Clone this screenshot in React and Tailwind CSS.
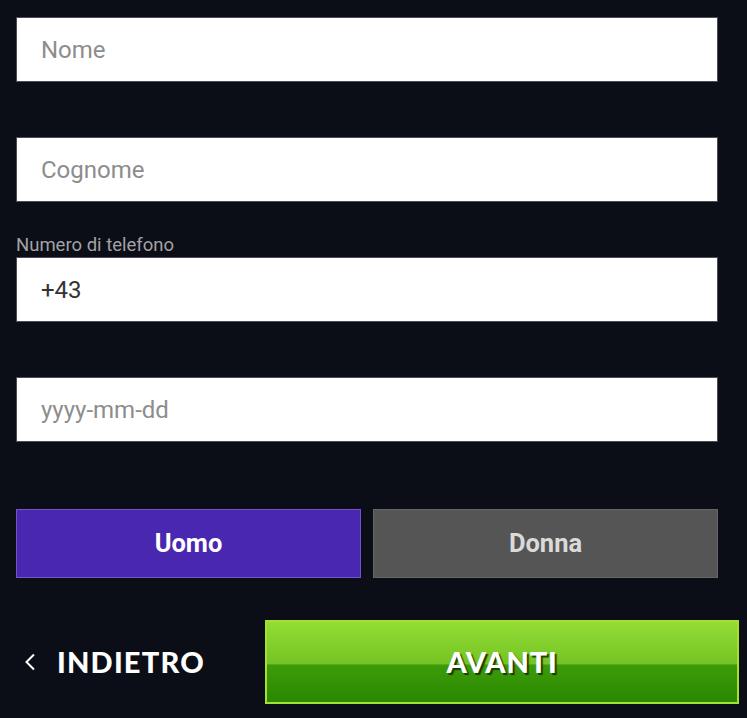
import React from "react";

function Field({ placeholder, value }) {
  return (
    <div className="h-[65px] w-[702px] bg-white border border-[#4b4e56] flex items-center pl-6">
      <input
        className="w-full h-full outline-none bg-transparent text-[24px] text-[#333333] placeholder:text-[#8d8d8d]"
        style={{ fontFamily: "Roboto, sans-serif" }}
        placeholder={placeholder}
        defaultValue={value}
      />
    </div>
  );
}

export default function App() {
  return (
    <div className="w-[747px] h-[718px] bg-[#0b0e16] overflow-hidden">
      <div className="pl-4 pt-[17px] flex flex-col">
        <Field placeholder="Nome" />
        <div className="mt-[55px]">
          <Field placeholder="Cognome" />
        </div>
        <div
          className="mt-[33px] h-[20px] leading-[20px] text-[18.5px] text-[#a2a2a6] mb-[2px]"
          style={{ fontFamily: "Roboto, sans-serif" }}
        >
          Numero di telefono
        </div>
        <Field value="+43" />
        <div className="mt-[55px]">
          <Field placeholder="yyyy-mm-dd" />
        </div>
        <div
          className="mt-[67px] flex gap-3 w-[702px]"
          style={{ fontFamily: "Roboto, sans-serif" }}
        >
          <button className="h-[69px] flex-1 bg-[#4a27b1] border border-[#6e55c9] text-white font-bold text-[25.5px]">
            Uomo
          </button>
          <button className="h-[69px] flex-1 bg-[#555555] border border-[#666666] text-[#dadada] font-bold text-[25.5px]">
            Donna
          </button>
        </div>
        <div className="mt-[42px] flex items-center">
          <div className="w-[249px] flex items-center">
            <svg width="12" height="18" viewBox="0 0 12 18" className="ml-[8px]">
              <polyline
                points="10,1.5 2.5,9 10,16.5"
                fill="none"
                stroke="#ffffff"
                strokeWidth="2"
                strokeLinejoin="miter"
              />
            </svg>
            <span
              className="ml-[21px] text-white text-[29px] font-black tracking-[1.2px]"
              style={{ fontFamily: "Lato, sans-serif" }}
            >
              INDIETRO
            </span>
          </div>
          <button
            className="w-[474px] h-[84px] border-2 border-[#a6df30] bg-[linear-gradient(to_bottom,#95dc35_0%,#74c424_52%,#3d9b0a_54%,#2a8800_100%)] text-white text-[29px] font-black tracking-[0.8px] [text-shadow:2px_2px_1px_rgba(20,50,0,0.9)]"
            style={{ fontFamily: "Lato, sans-serif" }}
          >
            AVANTI
          </button>
        </div>
      </div>
    </div>
  );
}
